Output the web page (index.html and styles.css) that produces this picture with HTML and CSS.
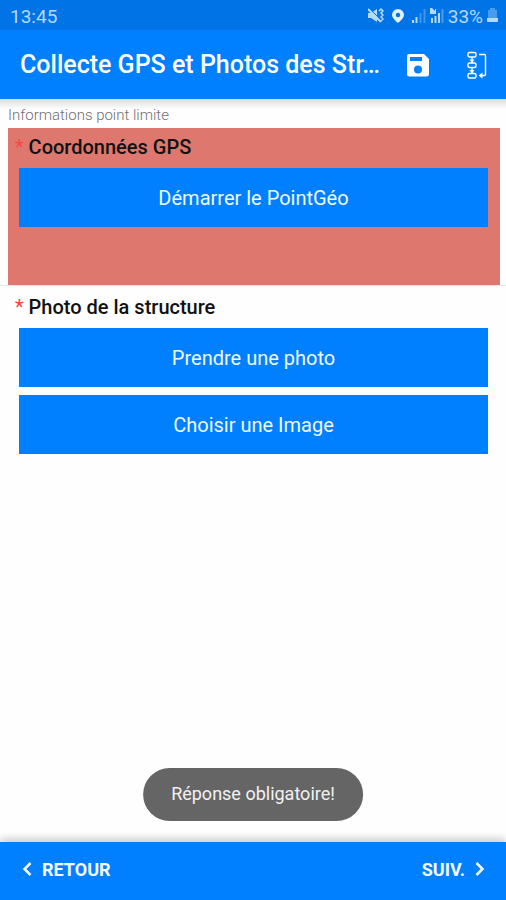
FILE: index.html
```html
<!DOCTYPE html>
<html lang="fr">
<head>
<meta charset="utf-8">
<meta name="viewport" content="width=device-width, initial-scale=1">
<title>Collecte GPS et Photos</title>
<link rel="stylesheet" href="styles.css">
</head>
<body>
<div class="status">
  <span class="clock">13:45</span>
  <div class="status-icons">
    <svg width="16" height="16" viewBox="0 0 16 16" aria-hidden="true">
      <path d="M0 5h3l6-4v13l-6-4H0z" fill="currentColor"/>
      <path d="M1 0l13 13" stroke="#0073e6" stroke-width="1"/>
      <path d="M0 1l13 13" stroke="currentColor" stroke-width="2"/>
      <path d="M11 3l2-2 2 2-2 2 2 2-2 2 2 2-2 2" fill="none" stroke="currentColor" stroke-width="1.500"/>
    </svg>
    <svg class="pin" width="12" height="16" viewBox="0 0 12 16" aria-hidden="true">
      <path fill="currentColor" fill-rule="evenodd" d="M6 1a6 6 0 0 0-6 6c0 3.500 6 8 6 8s6-4.500 6-8a6 6 0 0 0-6-6zm0 3.800a2.200 2.200 0 1 1 0 4.400 2.200 2.200 0 0 1 0-4.400z"/>
    </svg>
    <svg width="14" height="16" viewBox="0 0 14 16" aria-hidden="true">
      <path d="M1 12v3M4.500 9v6" stroke="currentColor" stroke-width="2"/>
      <path d="M8.500 5v10M12.500 1v14" stroke="currentColor" stroke-width="2" opacity=".35"/>
    </svg>
    <svg width="14" height="16" viewBox="0 0 14 16" aria-hidden="true">
      <path d="M2 10v5M5.500 8v7M9 5v10" stroke="currentColor" stroke-width="2"/>
      <path d="M12.500 1v14" stroke="currentColor" stroke-width="2" opacity=".4"/>
      <path d="M0 0h2l3 3V1h1v5H0z" fill="currentColor"/>
    </svg>
    <span class="battery-text">33%</span>
    <svg width="11" height="16" viewBox="0 0 11 16" aria-hidden="true">
      <path d="M3 0h5v2h2v8H1V2h2z" fill="currentColor" opacity=".4"/>
      <path d="M0 10h11v3a1 1 0 0 1-1 1H1a1 1 0 0 1-1-1z" fill="currentColor"/>
    </svg>
  </div>
</div>

<header class="appbar">
  <h1>Collecte GPS et Photos des Str…</h1>
  <button class="icon-button" type="button" aria-label="Enregistrer">
    <svg width="24" height="24" viewBox="0 0 24 24" aria-hidden="true">
      <path fill="currentColor" fill-rule="evenodd" d="M3 1h15l5 5v15a2.500 2.500 0 0 1-2.500 2.500h-17A2.500 2.500 0 0 1 1 21V3.500A2.500 2.500 0 0 1 3 1zm1 3v4h12V4zm8 8.500a4 4 0 1 0 0 8 4 4 0 0 0 0-8z"/>
    </svg>
  </button>
  <button class="icon-button" type="button" aria-label="Aller à">
    <svg width="20" height="28" viewBox="0 0 20 28" fill="none" stroke="currentColor" aria-hidden="true">
      <g stroke-width="1.400">
        <rect x="1" y="1.500" width="8" height="4.500" rx="1.500"/>
        <rect x="1" y="12" width="8" height="4.500" rx="1.500"/>
        <rect x="1" y="22.500" width="8" height="4.500" rx="1.500"/>
        <path d="M5 6v6M5 17v5"/>
        <path d="M12 3.500h5.500a1 1 0 0 1 1 1v19a1 1 0 0 1-1 1H13"/>
      </g>
      <path d="M15.500 21.500v6l-4-3zM2.500 8.500h5L5 12zM2.500 19h5L5 22.500z" fill="currentColor" stroke="none"/>
    </svg>
  </button>
</header>

<main>
  <p class="group-title">Informations point limite</p>
  <section class="question invalid">
    <h2><span class="required">*</span> Coordonnées GPS</h2>
    <button class="action" type="button">Démarrer le PointGéo</button>
  </section>
  <hr class="divider">
  <section class="question">
    <h2><span class="required">*</span> Photo de la structure</h2>
    <button class="action" type="button">Prendre une photo</button>
    <button class="action" type="button">Choisir une Image</button>
  </section>
</main>

<div class="toast" role="status">Réponse obligatoire!</div>

<footer class="navbar">
  <button class="nav-button" type="button">
    <svg width="10" height="16" viewBox="0 0 10 16" aria-hidden="true"><path d="M8.500 2L2.500 8l6 6" fill="none" stroke="currentColor" stroke-width="2.500"/></svg>
    RETOUR
  </button>
  <button class="nav-button" type="button">
    SUIV.
    <svg width="10" height="16" viewBox="0 0 10 16" aria-hidden="true"><path d="M1.500 2l6 6-6 6" fill="none" stroke="currentColor" stroke-width="2.500"/></svg>
  </button>
</footer>
</body>
</html>
```
FILE: styles.css
```css
* {
  box-sizing: border-box;
}

body {
  margin: 0;
  min-height: 100vh;
  display: flex;
  flex-direction: column;
  position: relative;
  background: #fefefe;
  color: #111;
  font-family: Roboto, "Liberation Sans", sans-serif;
}

h1,
h2,
p {
  margin: 0;
}

button {
  margin: 0;
  border: 0;
  padding: 0;
  background: none;
  color: inherit;
  font: inherit;
  cursor: pointer;
}

svg {
  display: block;
  flex: none;
}

.status {
  display: flex;
  justify-content: space-between;
  align-items: center;
  height: 30px;
  padding: 2px 8px 0 10px;
  background: #0073e6;
  color: #b5daff;
  font-size: 19px;
}

.status-icons {
  display: flex;
  align-items: center;
  gap: 4px;
}

.pin {
  margin: 0 4px;
  color: #e0f0ff;
}

.appbar {
  display: flex;
  align-items: center;
  height: 69px;
  padding: 0 19px 0 20px;
  background: #0080ff;
  color: #fff;
}

.appbar h1 {
  flex: 1;
  font-size: 25px;
  font-weight: 500;
  line-height: 32px;
  white-space: nowrap;
}

.icon-button {
  display: grid;
  place-items: center;
  height: 48px;
  margin-left: 24px;
}

.icon-button + .icon-button {
  margin-left: 37px;
}

main {
  flex: 1;
  background: linear-gradient(#d9dcdc, #fefefe 10px);
}

.group-title {
  padding: 6px 8px 3px;
  color: #707070;
  font-size: 15px;
  font-weight: 300;
  line-height: 20px;
}

.question {
  display: flex;
  flex-direction: column;
  gap: 8px;
  margin: 0 6px 0 8px;
  padding: 7px 12px 0 11px;
}

.question h2 {
  margin: 0 0 1px -4px;
  font-size: 20px;
  font-weight: 500;
  line-height: 24px;
}

.required {
  color: #f44336;
  font-weight: 400;
}

.invalid {
  min-height: 157px;
  background: #de786f;
}

.invalid .required {
  color: #fa4640;
}

.divider {
  height: 1px;
  margin: 0 0 2px;
  border: 0;
  background: #e4e4e4;
}

.action {
  height: 59px;
  padding-top: 1px;
  background: #0080ff;
  color: #f0f8ff;
  font-size: 20px;
}

.toast {
  position: absolute;
  left: 50%;
  bottom: 79px;
  transform: translateX(-50%);
  padding: 14px 28px 15px;
  border-radius: 27px;
  background: #656565;
  color: #f2f2f2;
  font-size: 18px;
  line-height: 24px;
  white-space: nowrap;
}

.navbar {
  display: flex;
  justify-content: space-between;
  height: 58px;
  padding: 0 21px 4px 22px;
  background: #0080ff;
  box-shadow: 0 -3px 8px #c8c8c8;
  color: #f4faff;
}

.nav-button {
  display: flex;
  align-items: center;
  gap: 10px;
  font-size: 18px;
  font-weight: 700;
}
```
